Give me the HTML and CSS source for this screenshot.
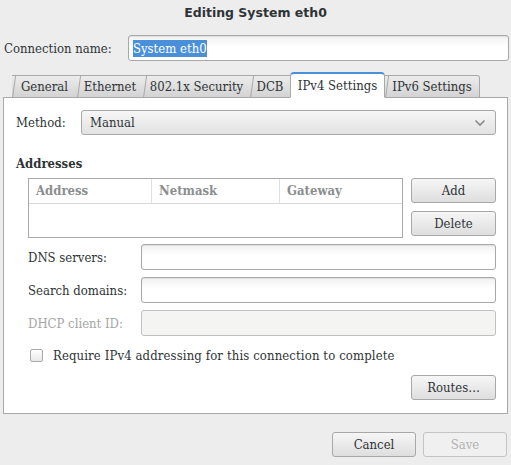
FILE: index.html
```html
<!DOCTYPE html>
<html>
<head>
<meta charset="utf-8">
<link rel="stylesheet" href="styles.css">
</head>
<body>
<div class="window">
  <div class="title">Editing System eth0</div>
  <div class="name-row">
    <span class="name-label">Connection name:</span>
    <div class="entry name-entry"><span class="sel">System eth0</span></div>
  </div>
  <div class="notebook">
    <div class="tabs">
      <div class="tab first t1">General</div>
      <div class="tab t2">Ethernet</div>
      <div class="tab t3">802.1x Security</div>
      <div class="tab t4">DCB</div>
      <div class="tab active t5">IPv4 Settings</div>
      <div class="tab last t6">IPv6 Settings</div>
    </div>
    <div class="page">
      <div class="method-row">
        <span class="method-label">Method:</span>
        <div class="combo">
          <span>Manual</span>
          <svg class="chev" width="12" height="8" viewBox="0 0 12 8"><path d="M1.5 1.5 L6 6 L10.5 1.5" fill="none" stroke="#8a8a8a" stroke-width="1.6"/></svg>
        </div>
      </div>
      <div class="section">Addresses</div>
      <div class="addr-row">
        <div class="table">
          <div class="thead">
            <div class="th c1">Address</div>
            <div class="th c2">Netmask</div>
            <div class="th c3">Gateway</div>
          </div>
        </div>
        <div class="addr-buttons">
          <div class="button">Add</div>
          <div class="button">Delete</div>
        </div>
      </div>
      <div class="form">
        <span class="flabel">DNS servers:</span>
        <div class="entry"></div>
        <span class="flabel">Search domains:</span>
        <div class="entry"></div>
        <span class="flabel disabled">DHCP client ID:</span>
        <div class="entry off"></div>
      </div>
      <div class="check-row">
        <span class="checkbox"></span>
        <span class="check-label">Require IPv4 addressing for this connection to complete</span>
      </div>
      <div class="routes-row">
        <div class="button">Routes…</div>
      </div>
    </div>
  </div>
  <div class="actions">
    <div class="button">Cancel</div>
    <div class="button insensitive">Save</div>
  </div>
</div>
</body>
</html>
```
FILE: styles.css
```css
* { box-sizing: border-box; }
html, body { margin: 0; padding: 0; }
body {
  background: #ededed;
  font-family: "DejaVu Serif Condensed", "DejaVu Serif", serif;
  font-size: 13px;
  color: #2e3436;
  width: 511px;
  height: 465px;
  overflow: hidden;
}
.window { width: 511px; height: 465px; }
.title {
  height: 26px;
  line-height: 26px;
  text-align: center;
  font-family: "DejaVu Sans", sans-serif;
  font-weight: bold;
  font-size: 12.5px;
  color: #2e3436;
}
.name-row {
  display: flex;
  align-items: center;
  margin-top: 9px;
  padding: 0 2px 0 4px;
}
.name-label { width: 124px; }
.entry {
  height: 26px;
  border: 1px solid #a8a8a8;
  border-radius: 3px;
  background: linear-gradient(#f1f1f1, #ffffff 45%);
  box-shadow: inset 0 1px 1px rgba(0,0,0,0.08);
  display: flex;
  align-items: center;
  padding: 0 4px;
}
.name-entry { flex: 1; }
.sel { background: #4a90d9; color: #fff; padding: 1px 0; }
.entry.off { background: #f4f4f2; box-shadow: none; border-color: #c0c0c0; }

.notebook { margin: 11px 3px 0 3px; }
.tabs {
  display: flex;
  align-items: flex-end;
  padding-left: 9px;
  height: 26px;
  margin-bottom: -1px;
  position: relative;
  z-index: 1;
}
.tab {
  position: relative;
  height: 23px;
  line-height: 22px;
  text-align: center;
  border-top: 1px solid #a8a8a8;
  border-bottom: 1px solid #a8a8a8;
  background: linear-gradient(#ececec, #d3d3d3);
  color: #2e3436;
  white-space: nowrap;
}
.t1 { width: 65px; }
.t2 { width: 66px; }
.t3 { width: 107px; }
.t4 { width: 40px; }
.t5 { width: 95px; }
.t6 { width: 95px; }
.tab::before {
  content: "";
  position: absolute;
  left: 0; top: -1px; bottom: -1px;
  border-left: 1px solid #a8a8a8;
  transform: skewX(-8deg);
  transform-origin: bottom left;
}
.tab.last { border-right: 1px solid #a8a8a8; border-top-right-radius: 3px; }
.tab.active {
  height: 26px;
  line-height: 24px;
  background: #fff;
  border: 1px solid #a8a8a8;
  border-top: 2px solid #4a90d9;
  border-bottom: 1px solid #fff;
  border-radius: 4px 4px 0 0;
}
.tab.active::before { display: none; }
.page {
  height: 317px;
  background: #fff;
  border: 1px solid #a8a8a8;
  padding: 12px 11px 0 12px;
}
.method-row { display: flex; align-items: center; }
.method-label { width: 65px; }
.combo {
  flex: 1;
  height: 25px;
  border: 1px solid #a8a8a8;
  border-radius: 3px;
  background: linear-gradient(#f6f6f6, #e2e2e2);
  display: flex;
  align-items: center;
  justify-content: space-between;
  padding: 0 9px 0 8px;
}
.chev { display: block; }
.section {
  font-weight: bold;
  margin-top: 20px;
  height: 18px;
  line-height: 18px;
}
.addr-row {
  display: flex;
  gap: 8px;
  margin-top: 5px;
  padding-left: 12px;
}
.table {
  width: 375px;
  height: 60px;
  border: 1px solid #a8a8a8;
  background: #fff;
}
.thead {
  display: flex;
  height: 25px;
  border-bottom: 1px solid #d8d8d8;
  color: #8b8e8f;
  font-weight: bold;
}
.th { line-height: 23px; padding-left: 7px; border-right: 1px solid #e0e0e0; }
.c1 { width: 123px; }
.c2 { width: 128px; }
.c3 { flex: 1; border-right: none; }
.addr-buttons { display: flex; flex-direction: column; gap: 8px; }
.button {
  width: 85px;
  height: 25px;
  border: 1px solid #a8a8a8;
  border-radius: 3px;
  background: linear-gradient(#f6f6f6, #dedede);
  display: flex;
  align-items: center;
  justify-content: center;
  color: #2e3436;
}
.form {
  display: grid;
  grid-template-columns: 113px 1fr;
  row-gap: 7px;
  align-items: center;
  margin-top: 6px;
  padding-left: 12px;
}
.flabel.disabled { color: #a4a6a6; }
.check-row {
  display: flex;
  align-items: center;
  margin-top: 10px;
  height: 18px;
  padding-left: 14px;
}
.check-label { letter-spacing: 0.12px; }
.checkbox {
  width: 13px;
  height: 13px;
  border: 1px solid #aaa;
  border-radius: 2px;
  background: linear-gradient(#fff, #e8e8e8);
  margin-right: 10px;
}
.routes-row {
  display: flex;
  justify-content: flex-end;
  margin-top: 11px;
}
.actions {
  display: flex;
  justify-content: flex-end;
  gap: 7px;
  margin-top: 18px;
  padding-right: 4px;
}
.actions .button { width: 84px; }
.button.insensitive {
  background: #f0f0f0;
  border-color: #c4c4c4;
  color: #b0b2b2;
}
```
